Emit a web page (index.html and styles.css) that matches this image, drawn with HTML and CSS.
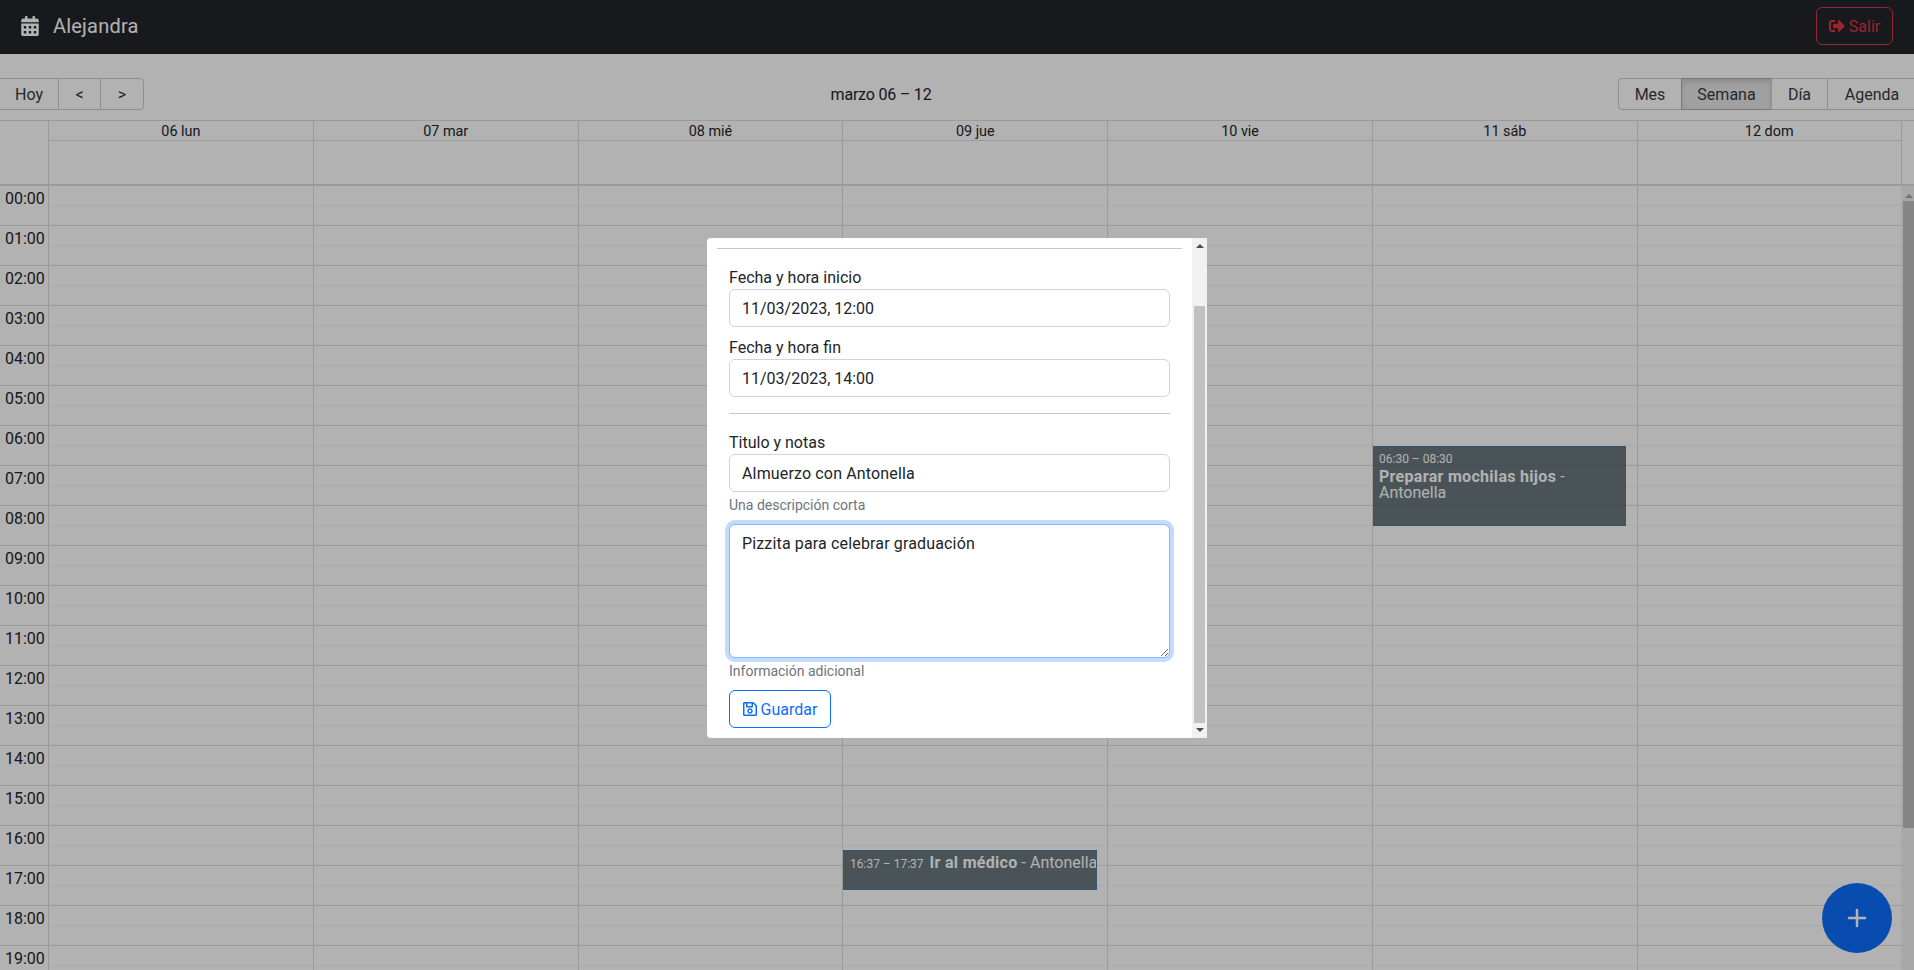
FILE: index.html
```html
<!DOCTYPE html>
<html lang="es">
<head>
  <meta charset="UTF-8">
  <title>Calendario</title>
  <link rel="stylesheet" href="styles.css">
</head>
<body>

  <nav class="navbar">
    <span class="brand">
      <svg class="icon-cal" viewBox="0 0 448 512"><path d="M0 464c0 26.5 21.5 48 48 48h352c26.5 0 48-21.5 48-48V192H0v272zm320-196c0-6.6 5.4-12 12-12h40c6.6 0 12 5.4 12 12v40c0 6.6-5.4 12-12 12h-40c-6.6 0-12-5.4-12-12v-40zm0 128c0-6.6 5.4-12 12-12h40c6.6 0 12 5.4 12 12v40c0 6.6-5.4 12-12 12h-40c-6.6 0-12-5.4-12-12v-40zM192 268c0-6.6 5.4-12 12-12h40c6.6 0 12 5.4 12 12v40c0 6.6-5.4 12-12 12h-40c-6.6 0-12-5.4-12-12v-40zm0 128c0-6.6 5.4-12 12-12h40c6.6 0 12 5.4 12 12v40c0 6.6-5.4 12-12 12h-40c-6.6 0-12-5.4-12-12v-40zM64 268c0-6.6 5.4-12 12-12h40c6.6 0 12 5.4 12 12v40c0 6.6-5.4 12-12 12H76c-6.6 0-12-5.4-12-12v-40zm0 128c0-6.6 5.4-12 12-12h40c6.6 0 12 5.4 12 12v40c0 6.6-5.4 12-12 12H76c-6.6 0-12-5.4-12-12v-40zM400 64h-48V16c0-8.8-7.2-16-16-16h-32c-8.8 0-16 7.2-16 16v48H160V16c0-8.8-7.2-16-16-16h-32c-8.8 0-16 7.2-16 16v48H48C21.5 64 0 85.5 0 112v48h448v-48c0-26.5-21.5-48-48-48z"/></svg>
      Alejandra
    </span>
    <button class="btn-salir">
      <svg class="icon-out" viewBox="0 0 512 512"><path d="M497 273L329 441c-15 15-41 4.5-41-17v-96H152c-13.3 0-24-10.7-24-24v-96c0-13.3 10.7-24 24-24h136V88c0-21.4 25.9-32 41-17l168 168c9.3 9.4 9.3 24.6 0 34zM192 436v-40c0-6.6-5.4-12-12-12H96c-17.7 0-32-14.3-32-32V160c0-17.7 14.3-32 32-32h84c6.6 0 12-5.4 12-12V76c0-6.6-5.4-12-12-12H96c-53 0-96 43-96 96v192c0 53 43 96 96 96h84c6.6 0 12-5.4 12-12z"/></svg>
      Salir
    </button>
  </nav>

  <div class="toolbar">
    <div class="btn-group group-left">
      <button class="tb-btn btn-hoy">Hoy</button>
      <button class="tb-btn btn-prev">&lt;</button>
      <button class="tb-btn btn-next">&gt;</button>
    </div>
    <span class="toolbar-label">marzo 06 – 12</span>
    <div class="btn-group group-right">
      <button class="tb-btn btn-mes">Mes</button>
      <button class="tb-btn btn-semana">Semana</button>
      <button class="tb-btn btn-dia">Día</button>
      <button class="tb-btn btn-agenda">Agenda</button>
    </div>
  </div>

  <div class="time-header">
    <div class="corner"></div>
    <div class="head-col"><div class="head-label">06 lun</div></div>
    <div class="head-col"><div class="head-label">07 mar</div></div>
    <div class="head-col"><div class="head-label">08 mié</div></div>
    <div class="head-col"><div class="head-label">09 jue</div></div>
    <div class="head-col"><div class="head-label">10 vie</div></div>
    <div class="head-col"><div class="head-label">11 sáb</div></div>
    <div class="head-col head-last"><div class="head-label">12 dom</div></div>
  </div>

  <div class="time-body">
    <div class="grid">
      <div class="gutter" id="gutter"></div>
      <div class="days" id="days"></div>
      <div class="event event-long">
        <div class="event-time">06:30 – 08:30</div>
        <div class="event-title"><strong>Preparar mochilas hijos</strong> - Antonella</div>
      </div>
      <div class="event event-short">
        <div class="event-time">16:37 – 17:37</div>
        <div class="event-title"><strong>Ir al médico</strong> - Antonella</div>
      </div>
    </div>
    <div class="page-scroll">
      <span class="arrow-up"></span>
      <div class="page-thumb"></div>
    </div>
  </div>

  <button class="fab">
    <svg class="icon-plus" viewBox="0 0 20 20"><path d="M10 2v16M2 10h16"/></svg>
  </button>

  <div class="overlay">
    <div class="modal">
      <div class="modal-body">
        <hr>
        <form class="form">
          <div class="form-group">
            <label>Fecha y hora inicio</label>
            <input class="form-control" type="text" value="11/03/2023, 12:00">
          </div>
          <div class="form-group">
            <label>Fecha y hora fin</label>
            <input class="form-control" type="text" value="11/03/2023, 14:00">
          </div>
          <hr>
          <div class="form-group">
            <label>Titulo y notas</label>
            <input class="form-control text-value" type="text" value="Almuerzo con Antonella">
            <small class="form-text">Una descripción corta</small>
          </div>
          <div class="form-group">
            <textarea class="form-control text-value notes">Pizzita para celebrar graduación</textarea>
            <small class="form-text">Información adicional</small>
          </div>
          <button type="button" class="btn-save">
            <svg class="icon-save" viewBox="0 0 448 512"><path d="M433.941 129.941l-83.882-83.882A48 48 0 0 0 316.118 32H48C21.49 32 0 53.49 0 80v352c0 26.51 21.49 48 48 48h352c26.51 0 48-21.49 48-48V163.882a48 48 0 0 0-14.059-33.941zM272 80v80H144V80h128zm122 352H54a6 6 0 0 1-6-6V86a6 6 0 0 1 6-6h42v104c0 13.255 10.745 24 24 24h176c13.255 0 24-10.745 24-24V83.882l78.243 78.243a6 6 0 0 1 1.757 4.243V426a6 6 0 0 1-6 6zM224 232c-48.523 0-88 39.477-88 88s39.477 88 88 88 88-39.477 88-88-39.477-88-88-88zm0 128c-22.056 0-40-17.944-40-40s17.944-40 40-40 40 17.944 40 40-17.944 40-40 40z"/></svg>
            Guardar
          </button>
        </form>
      </div>
      <div class="modal-scroll">
        <span class="arrow-up dark"></span>
        <div class="modal-thumb"></div>
        <span class="arrow-down dark"></span>
      </div>
    </div>
  </div>

  <script>
    const gutter = document.getElementById("gutter");
    const days = document.getElementById("days");

    for (let h = 0; h < 20; h++) {
      const row = document.createElement("div");
      row.className = "gutter-slot";
      row.textContent = String(h).padStart(2, "0") + ":00";
      gutter.appendChild(row);
    }

    for (let d = 0; d < 7; d++) {
      const col = document.createElement("div");
      col.className = "day";
      for (let h = 0; h < 20; h++) {
        const group = document.createElement("div");
        group.className = "hour";
        group.innerHTML = '<div class="slot"></div>';
        col.appendChild(group);
      }
      days.appendChild(col);
    }
  </script>

</body>
</html>
```

FILE: styles.css
```css
* {
  box-sizing: border-box;
}
html, body {
  height: 100%;
}
body {
  margin: 0;
  overflow: hidden;
  background: #fff;
  color: #212529;
  font-family: Roboto, sans-serif;
  font-size: 16px;
}
button, input, textarea {
  font-family: inherit;
}

/* navbar */
.navbar {
  height: 54px;
  background: #212529;
  display: flex;
  align-items: center;
  justify-content: space-between;
  padding: 0 21px 2px;
}
.brand {
  display: flex;
  align-items: center;
  gap: 14px;
  color: #fff;
  font-size: 20px;
  letter-spacing: 0.2px;
}
.icon-cal {
  width: 18px;
  height: 20px;
  fill: currentColor;
}
.btn-salir {
  width: 77px;
  height: 38px;
  display: flex;
  align-items: center;
  justify-content: center;
  gap: 4px;
  background: none;
  border: 1px solid #dc3545;
  border-radius: 6px;
  color: #dc3545;
  font-size: 16px;
  padding: 0;
}
.icon-out {
  width: 16px;
  height: 16px;
  fill: currentColor;
}

/* toolbar */
.toolbar {
  display: flex;
  align-items: center;
  margin: 24px -3px 10px -1px;
  height: 32px;
}
.btn-group {
  display: flex;
}
.toolbar-label {
  flex: 1;
  text-align: center;
  letter-spacing: -0.2px;
}
.tb-btn {
  height: 32px;
  background: none;
  border: 1px solid #ccc;
  color: #373a3c;
  font-size: 16px;
  padding: 0;
  margin-left: -1px;
}
.btn-hoy { width: 60px; margin-left: 0; }
.btn-prev { width: 43px; }
.btn-next { width: 44px; border-radius: 0 4px 4px 0; }
.btn-mes { width: 64px; margin-left: 0; border-radius: 4px 0 0 4px; }
.btn-semana {
  width: 91px;
  background: #e6e6e6;
  border-color: #adadad;
  box-shadow: inset 0 3px 5px rgba(0, 0, 0, 0.125);
}
.btn-dia { width: 57px; }
.btn-agenda { width: 90px; }

/* week header */
.time-header {
  display: flex;
  height: 66px;
  border-top: 1px solid #ddd;
  border-bottom: 2px solid #ddd;
}
.corner {
  width: 48px;
  flex: none;
}
.head-col {
  flex: 0 0 264.8px;
  border-left: 1px solid #ddd;
}
.head-last {
  border-right: 1px solid #ddd;
}
.head-label {
  height: 20px;
  border-bottom: 1px solid #ddd;
  text-align: center;
  font-size: 14.4px;
  line-height: 21px;
}

/* week grid */
.time-body {
  display: flex;
  height: 784px;
  overflow: hidden;
}
.grid {
  position: relative;
  display: flex;
  flex: 1;
  height: 800px;
  overflow: hidden;
}
.gutter {
  width: 48px;
  flex: none;
}
.gutter-slot {
  height: 40px;
  padding: 0 5px;
  line-height: 26px;
  text-align: right;
  white-space: nowrap;
  border-bottom: 1px solid #ddd;
}
.days {
  display: flex;
  flex: 1;
}
.day {
  flex: 0 0 264.8px;
  border-left: 1px solid #ddd;
}
.hour {
  height: 40px;
  border-bottom: 1px solid #ddd;
}
.slot {
  height: 20px;
  border-bottom: 1px solid #f7f7f7;
}
.page-scroll {
  width: 13px;
  flex: none;
  position: relative;
  background: #f1f1f1;
}
.page-scroll .arrow-up {
  top: 8px;
  left: 7.5px;
  margin-left: -4px;
}
.page-thumb {
  position: absolute;
  top: 15px;
  height: 627px;
  left: 2px;
  right: 0;
  background: #c1c1c1;
}

/* events */
.event {
  position: absolute;
  background: #465660;
  border: 1px solid #265985;
  color: #fff;
  opacity: 0.8;
  overflow: hidden;
  font-size: 16px;
  line-height: 1;
  padding: 4px 5px;
}
.event-long {
  left: 1373px;
  top: 260px;
  width: 253px;
  height: 80px;
}
.event-long .event-time {
  margin-bottom: 2px;
}
.event-short {
  left: 843px;
  top: 664px;
  width: 254px;
  height: 40px;
  display: flex;
  gap: 6px;
  white-space: nowrap;
  padding-left: 6px;
}
.event-short .event-time {
  flex: none;
  margin-top: 1px;
}
.event-short .event-title {
  flex: none;
}
.event-time {
  font-size: 12px;
  line-height: 16px;
}
.event-title strong {
  letter-spacing: 0.3px;
}

/* floating add button */
.fab {
  position: fixed;
  right: 22px;
  bottom: 17px;
  width: 70px;
  height: 70px;
  border: none;
  border-radius: 50%;
  background: #0d6efd;
  display: flex;
  align-items: center;
  justify-content: center;
  padding: 0;
}
.icon-plus {
  width: 20px;
  height: 20px;
  fill: none;
  stroke: #fff;
  stroke-width: 2.5;
  stroke-linecap: round;
}

/* modal */
.overlay {
  position: fixed;
  inset: 0;
  background: rgba(0, 0, 0, 0.3);
}
.modal {
  position: absolute;
  left: 707px;
  top: 238px;
  width: 500px;
  height: 500px;
  display: flex;
  background: #fff;
  border-radius: 4px 0 0 4px;
  overflow: hidden;
}
.modal-body {
  flex: 1;
  padding: 10px;
  overflow: hidden;
}
.modal-body hr {
  height: 1px;
  margin: 0 0 16px;
  border: none;
  background: #c7c8c9;
}
.form {
  padding: 0 12px;
}
.form .form-group {
  margin-bottom: 8px;
}
.form hr {
  margin: 16px 0;
}
label {
  display: block;
  padding-top: 2px;
  line-height: 22px;
}
.form-control {
  display: block;
  width: 100%;
  height: 38px;
  padding: 6px 12px;
  border: 1px solid #ced4da;
  border-radius: 6px;
  color: #212529;
  font-size: 16px;
  line-height: 24px;
  outline: none;
}
.text-value {
  letter-spacing: 0.15px;
}
.notes {
  height: 134px;
  padding-top: 7px;
  resize: vertical;
  border-color: #86b7fe;
  box-shadow: 0 0 0 4px rgba(13, 110, 253, 0.25);
}
.form-text {
  display: block;
  margin-top: 3px;
  color: #6c757d;
  font-size: 14px;
  line-height: 21px;
}
.btn-save {
  display: flex;
  align-items: center;
  justify-content: center;
  gap: 4px;
  width: 102px;
  height: 38px;
  background: #fff;
  border: 1px solid #0d6efd;
  border-radius: 6px;
  color: #0d6efd;
  font-size: 16px;
  padding: 0;
}
.icon-save {
  width: 14px;
  height: 16px;
  fill: currentColor;
}
.modal-scroll {
  position: relative;
  width: 15px;
  flex: none;
  background: #f1f1f1;
}
.modal-thumb {
  position: absolute;
  left: 2px;
  right: 2px;
  top: 68px;
  bottom: 15px;
  background: #c1c1c1;
}
.arrow-up, .arrow-down {
  position: absolute;
  left: 50%;
  margin-left: -4px;
  border-left: 4px solid transparent;
  border-right: 4px solid transparent;
}
.arrow-up {
  top: 6px;
  border-bottom: 4px solid #a3a3a3;
}
.arrow-down {
  bottom: 6px;
  border-top: 4px solid #a3a3a3;
}
.arrow-up.dark {
  border-bottom-color: #505050;
}
.arrow-down.dark {
  border-top-color: #505050;
}
```
